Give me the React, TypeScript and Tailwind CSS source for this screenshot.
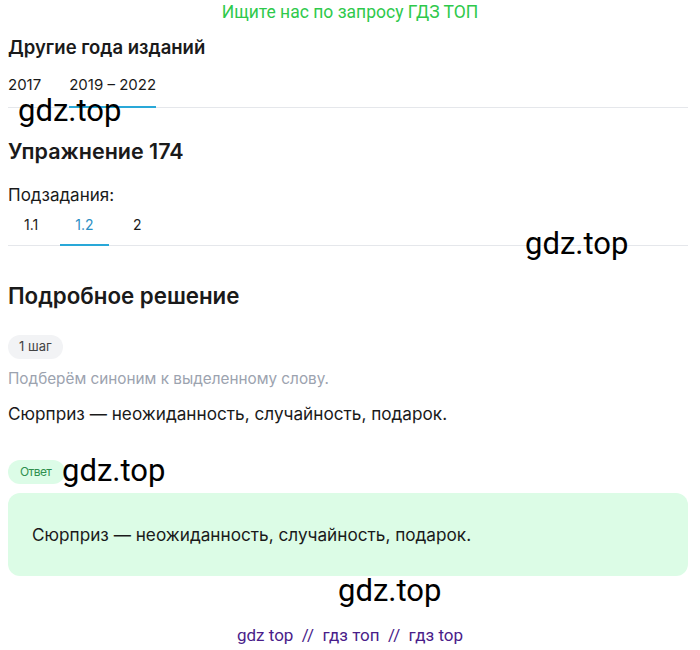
import React from "react";

const Mark = ({ className }: { className: string }) => (
  <span
    className={`absolute pointer-events-none text-[31px] leading-none text-black ${className}`}
    style={{ fontFamily: "Roboto, 'Liberation Sans', sans-serif" }}
  >
    gdz.top
  </span>
);

export default function App() {
  return (
    <div
      className="relative w-[700px] h-[650px] bg-white overflow-hidden text-[#1a1a1a]"
      style={{ fontFamily: "Inter, 'Noto Sans', sans-serif" }}
    >
      <div
        className="text-center text-[17.5px] leading-[24px] text-[#2ec94b]"
        style={{ fontFamily: "Roboto, 'Liberation Sans', sans-serif" }}
      >
        Ищите нас по запросу ГДЗ ТОП
      </div>

      <div className="pl-2 pr-3">
        <div className="mt-[11px] text-[18.5px] leading-[24px] font-semibold">Другие года изданий</div>
        <div className="mt-[16px] flex gap-[28px] border-b border-[#e5e7eb] text-[15px] leading-[20px]">
          <div className="pb-[11px] border-b-[2px] border-transparent mb-[-1px]">2017</div>
          <div className="pb-[11px] border-b-[2px] border-[#29a8d8] mb-[-1px]">2019 – 2022</div>
        </div>

        <div className="mt-[29px] text-[21.5px] leading-[28px] font-semibold">Упражнение 174</div>
        <div className="mt-[19px] text-[17px] leading-[22px]">Подзадания:</div>
        <div className="mt-[10px] flex border-b border-[#e5e7eb] text-[14px] leading-[18px]">
          <div className="w-[48px] pl-[16px] pb-[10px] border-b-[2px] border-transparent mb-[-1px]">1.1</div>
          <div className="ml-[4px] w-[49px] text-center pb-[10px] border-b-[2px] border-[#29a8d8] text-[#2c8fc4] mb-[-1px]">1.2</div>
          <div className="ml-[24px] pb-[10px] border-b-[2px] border-transparent mb-[-1px]">2</div>
        </div>

        <div className="mt-[36px] text-[22.3px] leading-[28px] font-semibold">Подробное решение</div>
        <div className="mt-[25px] inline-flex h-[24px] items-center rounded-full bg-[#f2f3f5] px-[11px] text-[13px] text-[#444]">
          1 шаг
        </div>
        <div className="mt-[9px] text-[15.3px] leading-[22px] text-[#9ca3af]">
          Подберём синоним к выделенному слову.
        </div>
        <div className="mt-[13px] text-[17.2px] leading-[22px]">
          Сюрприз — неожиданность, случайность, подарок.
        </div>
        <div className="mt-[35px] inline-flex h-[24px] items-center rounded-full bg-[#dcfce7] pl-[12px] pr-[14px] text-[12px] tracking-[-0.6px] text-[#2f8f4e]">
          Ответ
        </div>
        <div className="mt-[9px] flex h-[83px] items-center rounded-[12px] bg-[#dcfce6] px-[24px] text-[17.2px] leading-[22px]">
          Сюрприз — неожиданность, случайность, подарок.
        </div>
      </div>

      <div
        className="mt-[49px] text-center text-[17px] leading-[20px] text-[#4a1d8a]"
        style={{ fontFamily: "Roboto, 'Liberation Sans', sans-serif" }}
      >
        gdz top&nbsp; //&nbsp; гдз топ&nbsp; //&nbsp; гдз top
      </div>

      <Mark className="left-[18px] top-[95px]" />
      <Mark className="left-[525px] top-[228px]" />
      <Mark className="left-[62px] top-[455px]" />
      <Mark className="left-[338px] top-[575px]" />
    </div>
  );
}
